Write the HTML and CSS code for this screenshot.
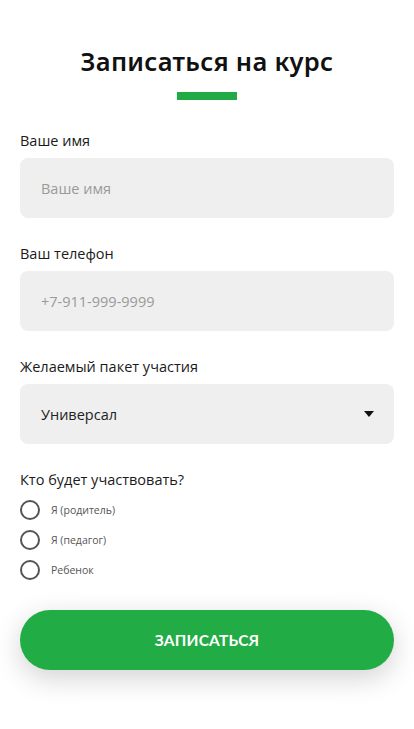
FILE: index.html
```html
<!DOCTYPE html>
<html lang="ru">
<head>
<meta charset="utf-8">
<link rel="stylesheet" href="styles.css">
</head>
<body>
<form class="form">
  <h1 class="title">Записаться на курс</h1>
  <div class="bar"></div>
  <div class="field">
    <label class="label">Ваше имя</label>
    <div class="input placeholder">Ваше имя</div>
  </div>
  <div class="field">
    <label class="label">Ваш телефон</label>
    <div class="input placeholder">+7-911-999-9999</div>
  </div>
  <div class="field">
    <label class="label">Желаемый пакет участия</label>
    <div class="input select">
      <span>Универсал</span>
      <svg class="caret" width="10" height="6" viewBox="0 0 10 6"><path d="M0 0H10L5 6Z" fill="#111"/></svg>
    </div>
  </div>
  <div class="field radios">
    <label class="label">Кто будет участвовать?</label>
    <div class="radio"><span class="circle"></span><span class="rtext">Я (родитель)</span></div>
    <div class="radio"><span class="circle"></span><span class="rtext">Я (педагог)</span></div>
    <div class="radio"><span class="circle"></span><span class="rtext">Ребенок</span></div>
  </div>
  <button type="button" class="btn">ЗАПИСАТЬСЯ</button>
</form>
</body>
</html>
```
FILE: styles.css
```css
* { box-sizing: border-box; }
html, body { margin: 0; padding: 0; background: #fff; }
body { font-family: "Open Sans", "Noto Sans", sans-serif; color: #111; }
.form { display: flex; flex-direction: column; padding: 44px 20px 60px; }
.title {
  margin: 0; text-align: center; font-family: "Noto Sans", sans-serif;
  font-weight: 600; font-size: 25.5px; line-height: 34px; color: #111; letter-spacing: 0.3px;
}
.bar { width: 60px; height: 8px; background: #22ab45; margin: 14px auto 31px; }
.field { display: flex; flex-direction: column; margin-bottom: 26px; }
.label { font-size: 14.5px; line-height: 20px; height: 20px; color: #1a1a1a; margin-bottom: 7px; }
.input {
  height: 60px; border-radius: 8px; background: #efefef; padding: 0 21px;
  display: flex; align-items: center; font-size: 14.5px; flex: none;
}
.placeholder { color: #9a9a9a; }
.select { justify-content: space-between; color: #222; padding-right: 20px; }
.radios { margin-bottom: 30px; }
.radios .label { margin-bottom: 10px; }
.radio { display: flex; align-items: center; height: 20px; margin-bottom: 10px; }
.radio:last-child { margin-bottom: 0; }
.circle { width: 20px; height: 20px; border: 2px solid #555; border-radius: 50%; margin-right: 11px; flex: none; }
.rtext { font-size: 10.5px; color: #555; }
.btn {
  height: 60px; border: 0; border-radius: 30px; background: #22ac45; color: #fff;
  font-family: Lato, sans-serif; font-weight: 700; font-size: 15.5px; letter-spacing: 0.2px;
  box-shadow: 0 8px 28px rgba(0,0,0,0.18); flex: none;
}
```
